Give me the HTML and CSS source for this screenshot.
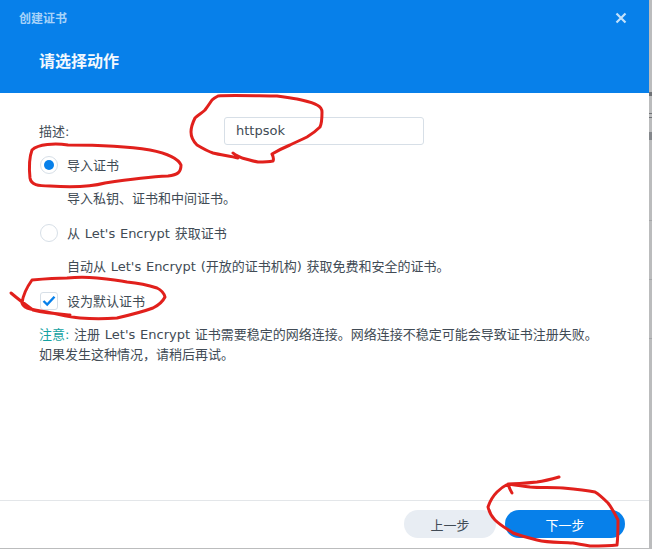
FILE: index.html
```html
<!DOCTYPE html>
<html lang="zh-CN">
<head>
<meta charset="utf-8">
<title>创建证书</title>
<link rel="stylesheet" href="styles.css">
</head>
<body>
<div class="backdrop">
  <div class="dialog">
    <header class="header">
      <div class="topbar">
        <span class="window-title">创建证书</span>
        <svg class="close" width="12" height="12" viewBox="0 0 12 12"><path d="M1.5 1.5L10.5 10.5M10.5 1.5L1.5 10.5"/></svg>
      </div>
      <h1 class="heading">请选择动作</h1>
    </header>
    <main class="content">
      <div class="field">
        <label class="field-label">描述:</label>
        <div class="input">httpsok</div>
      </div>
      <div class="option first">
        <span class="radio checked"></span><span class="option-text">导入证书</span>
      </div>
      <p class="hint">导入私钥、证书和中间证书。</p>
      <div class="option second">
        <span class="radio"></span><span class="option-text">从 Let's Encrypt 获取证书</span>
      </div>
      <p class="hint">自动从 Let's Encrypt (开放的证书机构) 获取免费和安全的证书。</p>
      <div class="option third">
        <span class="checkbox"><svg width="14" height="12" viewBox="0 0 14 12"><path d="M1.5 6L5.2 9.6L12.5 1.8"/></svg></span><span class="option-text">设为默认证书</span>
      </div>
      <p class="note"><span class="note-key">注意:</span> 注册 Let's Encrypt 证书需要稳定的网络连接。网络连接不稳定可能会导致证书注册失败。<br>如果发生这种情况，请稍后再试。</p>
    </main>
    <footer class="footer">
      <button class="btn secondary">上一步</button>
      <button class="btn primary">下一步</button>
    </footer>
  </div>
</div>
<svg class="ink" width="652" height="549" viewBox="0 0 652 549">
  <path d="M218 96C228 95 262 96 277 96C285 97 290 98 297 99C305 101 312 102 317 105C321 107 322 109 322 112C322 118 322 123 320 127C316 131 312 134 307 137C301 140 296 142 290 145C283 148 277 151 272 154C273 156 274 159 273 161C268 162 263 162 258 162C252 161 247 159 242 158C238 156 235 155 233 153M238 158C230 156 221 155 213 153C207 151 202 148 197 145C193 141 191 137 191 132C191 127 193 122 195 118C198 115 202 113 205 110C208 106 210 103 212 100C214 98 216 97 218 96"/>
  <path d="M32 150C38 144 55 143 68 145C95 145 125 146 150 150C165 153 178 158 181 165C181 172 178 175 168 176C145 177 125 180 105 183C90 187 65 187 50 186C38 186 31 185 30 178C29 168 29 158 32 150Z"/>
  <path d="M11 293C18 299 26 305 33 310C45 313 58 314 70 315M32 280C27 287 23 295 22 303C23 306 25 307 27 308C33 310 40 311 47 312C58 314 69 317 80 318C92 319 105 319 117 318C130 315 142 312 153 308C159 305 163 301 165 297C164 293 161 290 157 288C148 285 138 283 127 282C117 280 107 279 97 278C87 277 77 277 67 278C55 278 43 279 32 280Z"/>
  <path d="M559 477C552 479 544 481 537 482C527 483 517 484 508 484C509 487 510 490 512 493M508 484C515 485 522 486 530 487C541 488 552 487 563 488C574 489 585 490 595 492C600 495 604 499 608 503C612 508 615 514 618 520C618 528 618 537 617 545C608 546 599 546 590 546C584 545 578 544 573 543C561 542 549 543 537 540C529 538 521 536 513 533C507 529 500 525 495 520C491 516 489 511 488 507C490 501 493 496 497 492C500 489 504 486 508 484Z"/>
</svg>
</body>
</html>
```
FILE: styles.css
```css
* { box-sizing: border-box; }
html, body { margin: 0; padding: 0; }
body {
  width: 652px;
  height: 549px;
  overflow: hidden;
  background:
    linear-gradient(#a4a6a8, #a4a6a8) 649px 220px / 3px 1px no-repeat,
    linear-gradient(#a4a6a8, #a4a6a8) 649px 279px / 3px 1px no-repeat,
    linear-gradient(#a4a6a8, #a4a6a8) 649px 338px / 3px 1px no-repeat,
    linear-gradient(#6f7276, #6f7276) 649px 92px / 3px 4px no-repeat,
    linear-gradient(#6f7276, #6f7276) 649px 113px / 3px 1px no-repeat,
    linear-gradient(#6f7276, #6f7276) 649px 117px / 3px 1px no-repeat,
    linear-gradient(#84878b, #84878b) 649px 132px / 3px 8px no-repeat,
    #bbbcbd;
  font-family: "DejaVu Sans", "Noto Sans CJK SC", sans-serif;
  font-size: 13px;
  word-spacing: 0.6px;
  color: #414b55;
}
.backdrop { height: 548px; padding-right: 3px; }
.dialog {
  height: 100%;
  background: #fff;
  display: flex;
  flex-direction: column;
}
.header {
  height: 93px;
  background: #0780ea;
  padding: 0 19px;
  flex: none;
}
.topbar {
  height: 36px;
  display: flex;
  align-items: center;
  justify-content: space-between;
}
.window-title { font-size: 12px; font-weight: 700; color: #a7d3f9; margin-bottom: 2px; }
.close { margin-right: 3px; }
.close path { stroke: #c3e1fb; stroke-width: 2.2; fill: none; }
.heading {
  margin: 0 0 0 20px;
  font-size: 16px;
  line-height: 24px;
  padding-top: 14px;
  font-weight: 700;
  color: #f2f8fe;
}
.content { flex: 1; padding: 24px 0 0 39px; }
.field { display: flex; align-items: center; height: 28px; }
.field-label { width: 185px; margin-bottom: 2px; }
.input {
  width: 200px;
  height: 28px;
  border: 1px solid #d7dfe7;
  border-radius: 3px;
  padding: 0 11px;
  line-height: 26px;
  font-size: 13px;
}
.option { display: flex; align-items: center; height: 18px; gap: 9px; margin-left: 1px; line-height: 16px; }
.option-text { padding-top: 2px; }
.first { margin-top: 11px; }
.second { margin-top: 16px; }
.third { margin-top: 16px; }
.radio {
  width: 18px;
  height: 18px;
  border-radius: 50%;
  border: 1px solid #d7dfe7;
  background: #fff;
  display: flex;
  align-items: center;
  justify-content: center;
  flex: none;
}
.radio.checked::after {
  content: "";
  width: 10px;
  height: 10px;
  border-radius: 50%;
  background: #0780ea;
}
.checkbox {
  width: 18px;
  height: 18px;
  border: 1px solid #d7dfe7;
  border-radius: 3px;
  display: flex;
  align-items: center;
  justify-content: center;
  flex: none;
}
.checkbox path { stroke: #0780ea; stroke-width: 2.4; fill: none; }
.hint { margin: 16px 0 0 28px; line-height: 18px; }
.note { margin: 15px 0 0; line-height: 20px; }
.note-key { color: #14a2a2; }
.footer {
  height: 48px;
  flex: none;
  border-top: 1px solid #e3e6e9;
  padding: 9px 24px 0 0;
  display: flex;
  justify-content: flex-end;
  gap: 9px;
}
.btn {
  height: 28px;
  border: 0;
  border-radius: 14px;
  font: inherit;
  font-size: 13px;
  padding: 0;
}
.secondary { width: 92px; background: #e8edf3; color: #414b55; }
.primary { width: 120px; background: #0780ea; color: #fff; }
.ink {
  position: absolute;
  left: 0;
  top: 0;
  pointer-events: none;
}
.ink path {
  fill: none;
  stroke: #e1201c;
  stroke-width: 3;
  stroke-linecap: round;
  stroke-linejoin: round;
}
```
